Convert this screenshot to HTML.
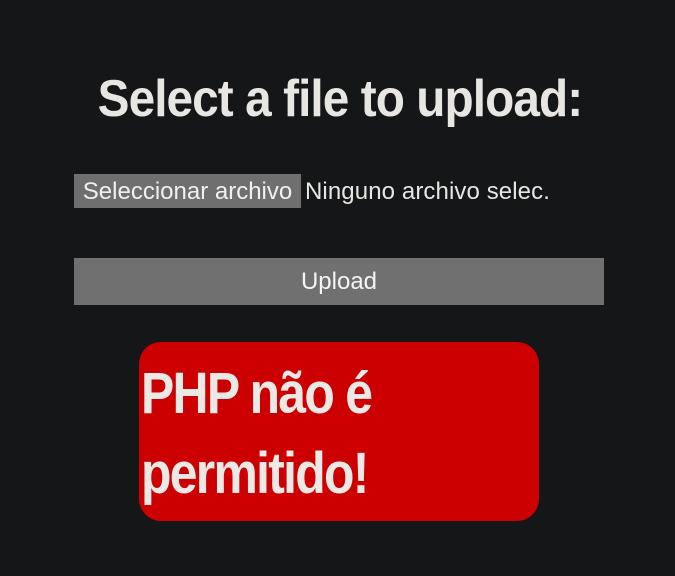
<!DOCTYPE html>
<html><head><meta charset="utf-8"><style>
html,body{margin:0;padding:0;background:#151618;width:675px;height:576px;overflow:hidden;font-family:"Liberation Sans",sans-serif;color:#e8e6e3}
.h{position:absolute;left:2px;width:675px;top:64px;text-align:center;font-weight:bold;font-size:52px;line-height:70px;letter-spacing:-1px}
.h span{display:inline-block;transform:scaleX(0.918);transform-origin:center}
.fb{position:absolute;left:74px;top:174px;width:227px;height:34px;background:#6f6f6f;font-size:24px;line-height:35px;text-align:center;color:#f0f0f0}
.ft{position:absolute;left:305px;top:174px;font-size:24px;line-height:35px;color:#e8e6e3;letter-spacing:0.1px}
.up{position:absolute;left:74px;top:258px;width:530px;height:47px;background:#707070;font-size:24px;line-height:47px;text-align:center;color:#f4f4f4}
.red{position:absolute;left:139px;top:342px;width:400px;height:179px;background:#cc0000;border-radius:22px}
.red div{position:absolute;left:2px;font-weight:bold;font-size:58px;letter-spacing:-2px;transform:scaleX(0.86);transform-origin:left;white-space:nowrap;color:#ebe9e6}
</style></head><body>
<div class="h"><span>Select a file to upload:</span></div>
<div class="fb">Seleccionar archivo</div>
<div class="ft">Ninguno archivo selec.</div>
<div class="up">Upload</div>
<div class="red"><div style="top:18px">PHP não é</div><div style="top:98px">permitido!</div></div>
</body></html>
